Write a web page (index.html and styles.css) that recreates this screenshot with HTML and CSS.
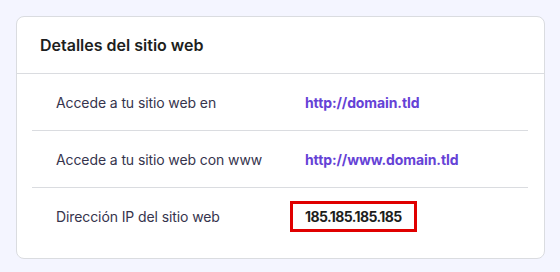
FILE: index.html
```html
<!DOCTYPE html>
<html lang="es">
<head>
  <meta charset="UTF-8">
  <meta name="viewport" content="width=device-width, initial-scale=1.0">
  <title>Detalles del sitio web</title>
  <link rel="stylesheet" href="styles.css">
</head>
<body>
  <div class="card">
    <div class="card-header">Detalles del sitio web</div>
    <div class="rows">
      <div class="row">
        <span class="label">Accede a tu sitio web en</span>
        <a class="value link" href="#">http://domain.tld</a>
      </div>
      <div class="row">
        <span class="label">Accede a tu sitio web con www</span>
        <a class="value link" href="#">http://www.domain.tld</a>
      </div>
      <div class="row">
        <span class="label">Dirección IP del sitio web</span>
        <span class="value"><span class="highlight">185.185.185.185</span></span>
      </div>
    </div>
  </div>
</body>
</html>
```

FILE: styles.css
```css
body {
  margin: 0;
  padding: 16px 15px 14px 16px;
  background-color: #f4f5ff;
  font-family: "Inter", "DejaVu Sans", sans-serif;
}

.card {
  background-color: #fff;
  border: 1px solid #dadce0;
  border-radius: 8px;
  padding-bottom: 14px;
}

.card-header {
  height: 56px;
  display: flex;
  align-items: center;
  padding: 0 23px;
  font-size: 16px;
  font-weight: 600;
  color: #1d1e20;
  border-bottom: 1px solid #dadce0;
}

.rows {
  padding: 0 16px 0 15px;
}

.row {
  display: grid;
  grid-template-columns: 249px 1fr;
  align-items: center;
  height: 56px;
  padding: 0 24px;
  border-bottom: 1px solid #dadce0;
}

.row:last-child {
  border-bottom: none;
}

.label {
  font-size: 14px;
  color: #36344d;
  letter-spacing: -0.1px;
}

.value {
  font-size: 14px;
  font-weight: 700;
  color: #1d1e20;
}

.link {
  color: #6542d6;
  text-decoration: none;
  letter-spacing: -0.1px;
}

.highlight {
  display: inline-block;
  border: 3px solid #e00000;
  padding: 4px 12px;
  margin-left: -15px;
  letter-spacing: -0.6px;
}
```
